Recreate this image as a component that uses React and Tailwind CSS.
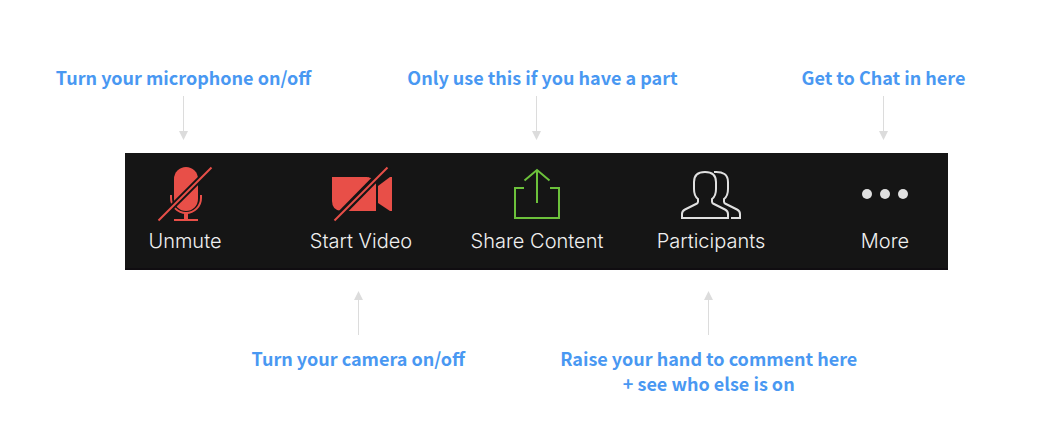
const callout =
  "whitespace-nowrap text-center text-lg leading-[25px] font-bold text-[#4998f2] font-['Noto_Sans_CJK_SC','Noto_Sans',sans-serif]";

function Arrow({ up = false }) {
  return (
    <svg width="9" height="44" viewBox="0 0 9 44" aria-hidden="true" className="shrink-0">
      {up ? (
        <path d="M4 44V9H0L4.5 0L9 9H5V44Z" fill="#dcdcdc" />
      ) : (
        <path d="M4 0V35H0L4.5 44L9 35H5V0Z" fill="#dcdcdc" />
      )}
    </svg>
  );
}

function MicIcon() {
  return (
    <svg width="60" height="60" viewBox="155 164 60 60" aria-hidden="true">
      <rect x="174" y="167" width="24" height="44" rx="12" fill="#e84f48" />
      <path d="M171 195V198A15 15 0 0 0 201 198V195" fill="none" stroke="#e84f48" strokeWidth="2" />
      <path d="M184 213H188V219H198V221H174V219H184Z" fill="#e84f48" />
      <path d="M162 217L213 166" stroke="#151515" strokeWidth="6" />
      <path d="M158.5 220.5L211.5 167.5" stroke="#e84f48" strokeWidth="2" />
    </svg>
  );
}

function VideoIcon() {
  return (
    <svg width="62" height="60" viewBox="330 164 62 60" aria-hidden="true">
      <path d="M332 177H367Q376 178 376 187V211H341Q332 210 332 201Z" fill="#e84f48" />
      <path d="M376 184V211H368V177Z" fill="#e84f48" />
      <path d="M378 186L390 177H392V211H390L378 203Z" fill="#e84f48" />
      <path d="M332 223L388 166" stroke="#151515" strokeWidth="7" />
      <path d="M334.5 220.5L387.5 167.5" stroke="#e84f48" strokeWidth="2" />
    </svg>
  );
}

function ShareIcon() {
  return (
    <svg width="60" height="60" viewBox="507 164 60 60" aria-hidden="true" fill="none" stroke="#6cc13b" strokeWidth="2">
      <path d="M524 188H515V218H559V188H550" />
      <path d="M537 203V170M524.5 180.5L537 170L549.5 180.5" />
    </svg>
  );
}

function PeopleIcon() {
  return (
    <svg width="62" height="60" viewBox="680 164 62 60" aria-hidden="true" fill="none" stroke="#e0e0e0" strokeWidth="2">
      <path d="M682 218V214Q682 211 685 209.500L697 203.500Q698 203 698 201.500V199Q694 196 694 189V182Q694 172 705 172Q716 172 716 182V189Q716 196 712 199V201.500Q712 203 713 203.500L725 209.500Q728 211 728 214V218Z" />
      <path d="M714 172Q728 171 728 182V189Q728 196 724 199V201.500Q724 203 725 203.500L737 209.500Q740 211 740 214V218H731" />
    </svg>
  );
}

function MoreIcon() {
  return (
    <svg width="60" height="60" viewBox="855 164 60 60" aria-hidden="true" fill="#e0e0e0">
      <circle cx="867" cy="194" r="5" />
      <circle cx="885" cy="194" r="5" />
      <circle cx="903" cy="194" r="5" />
    </svg>
  );
}

function Tool({ icon, label }) {
  return (
    <button type="button" className="flex flex-col items-center justify-self-center gap-[3px] whitespace-nowrap text-xl leading-7 font-light text-[#f0f0f0] font-['Inter','Liberation_Sans',sans-serif] -mx-4">
      {icon}
      {label}
    </button>
  );
}

export default function App() {
  return (
    <main className="min-h-screen bg-white pt-[65px] pb-12">
      <div className="grid grid-cols-[289fr_417fr_277fr] pl-[39px] pr-5">
        <div className="flex flex-col items-center gap-[6px]">
          <p className={callout}>Turn your microphone on/off</p>
          <Arrow />
        </div>
        <div className="flex flex-col items-center gap-[6px]">
          <p className={callout + " pl-3"}>Only use this if you have a part</p>
          <Arrow />
        </div>
        <div className="flex flex-col items-center gap-[6px]">
          <p className={callout}>Get to Chat in here</p>
          <Arrow />
        </div>
      </div>

      <nav aria-label="Meeting controls" className="mt-[13px] mr-[94px] ml-[125px] grid grid-cols-[120fr_232fr_120fr_228fr_120fr] border-b-2 border-[#100d11] bg-[#151515] pt-[11px] pr-[3px] pb-[13px]">
        <Tool icon={<MicIcon />} label="Unmute" />
        <Tool icon={<VideoIcon />} label="Start Video" />
        <Tool icon={<ShareIcon />} label="Share Content" />
        <Tool icon={<PeopleIcon />} label="Participants" />
        <Tool icon={<MoreIcon />} label="More" />
      </nav>

      <div className="mt-[21px] grid grid-cols-2 pr-[158px] pl-[183px]">
        <div className="flex flex-col items-center gap-[11px]">
          <Arrow up />
          <p className={callout}>Turn your camera on/off</p>
        </div>
        <div className="flex flex-col items-center gap-[11px]">
          <Arrow up />
          <p className={callout}>
            Raise your hand to comment here
            <br />+ see who else is on
          </p>
        </div>
      </div>
    </main>
  );
}
